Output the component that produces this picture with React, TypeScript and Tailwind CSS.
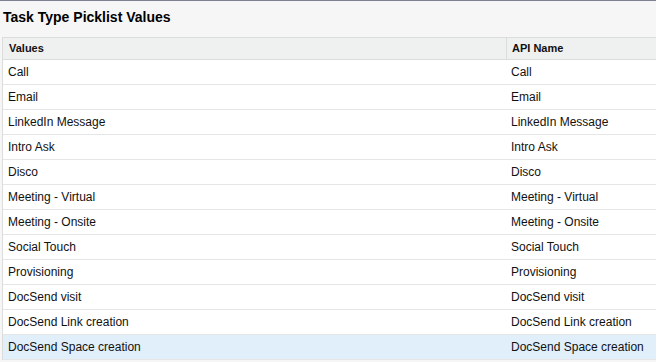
// Picklist values table for the Task Type field
const VALUES = [
  'Call',
  'Email',
  'LinkedIn Message',
  'Intro Ask',
  'Disco',
  'Meeting - Virtual',
  'Meeting - Onsite',
  'Social Touch',
  'Provisioning',
  'DocSend visit',
  'DocSend Link creation',
  'DocSend Space creation',
];

const HOVERED = 'DocSend Space creation';

const App = () => {
  return (
    <div
      className="h-[362px] w-[656px] overflow-hidden border-t border-[#7b8093] bg-[#f6f6f6] text-[#111]"
      style={{ fontFamily: '"Liberation Sans", Arial, Helvetica, sans-serif' }}
    >
      {/* 제목 */}
      <h2 className="pl-[3px] pt-[8px] text-[14px] font-bold leading-[16px] text-black">
        Task Type Picklist Values
      </h2>

      {/* 표 */}
      <div className="ml-[2px] mt-[12px] w-[700px] border-l border-[#dcdcdc]">
        <div className="grid grid-cols-[503px_1fr] border-y border-[#dcdcdc] bg-[#eff0f0] text-[11px] font-bold leading-[21px]">
          <div className="pl-[6px]">Values</div>
          <div className="border-l border-[#dcdcdc] pl-[5px]">API Name</div>
        </div>

        {VALUES.map((v) => (
          <div
            key={v}
            className={`grid grid-cols-[503px_1fr] border-b border-[#e6e6e6] text-[12px] leading-[24px] ${
              v === HOVERED ? 'bg-[#e1effb]' : 'bg-white'
            }`}
          >
            <div className="pl-[5px]">{v}</div>
            <div className="pl-[5px]">{v}</div>
          </div>
        ))}
      </div>
    </div>
  );
};

export default App;
